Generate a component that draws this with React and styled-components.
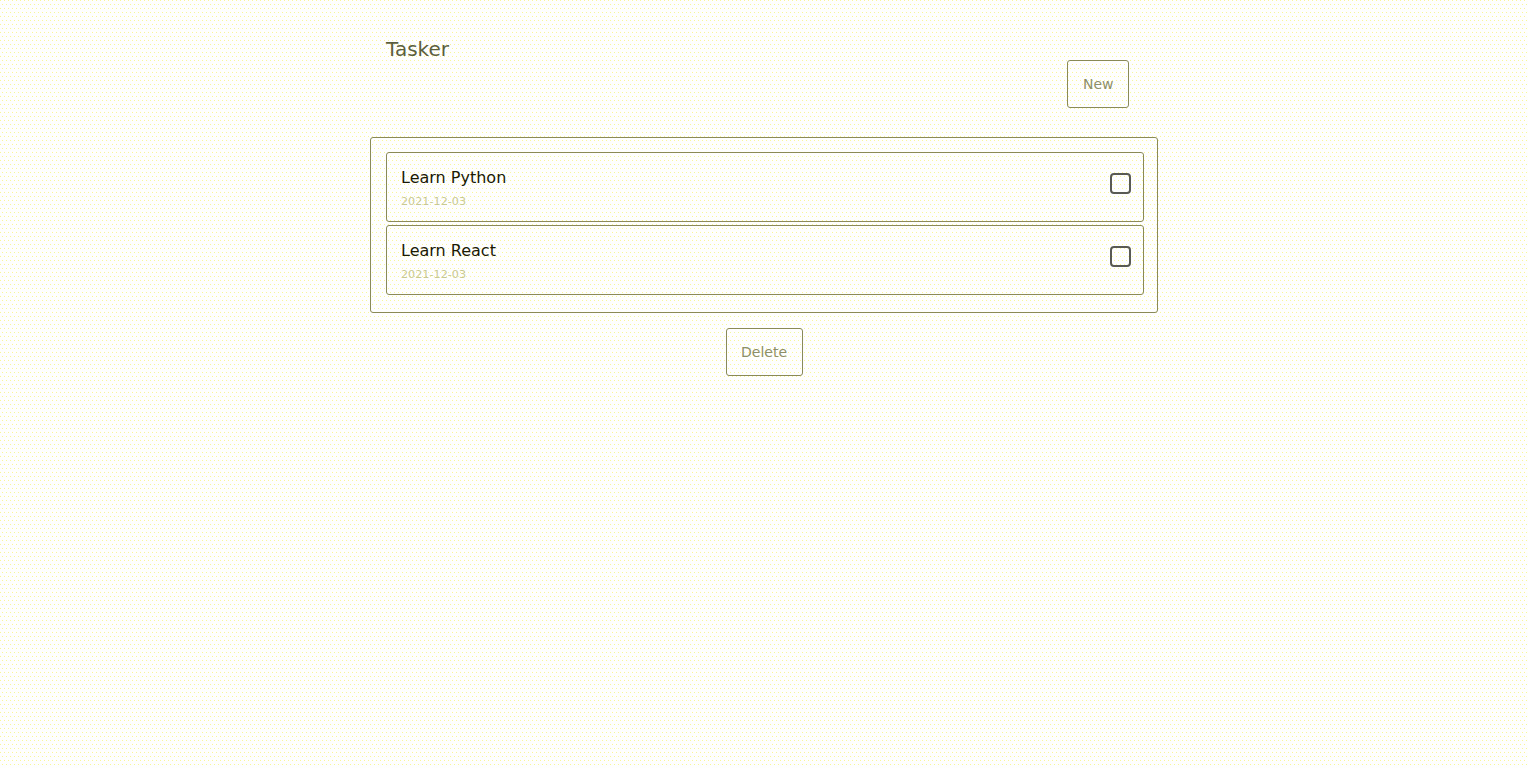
import styled, { createGlobalStyle } from 'styled-components';
import { useState } from 'react';

const GlobalStyle = createGlobalStyle`
  html, body {
    margin: 0;
    min-height: 100%;
  }
  body {
    font-family: 'DejaVu Sans', Verdana, sans-serif;
    background-color: #ffffff;
    background-image:
      conic-gradient(from 270deg at 1px 1px, #f9f59c 90deg, transparent 0),
      conic-gradient(from 270deg at 1px 1px, #f9f59c 90deg, transparent 0);
    background-size: 4px 8px, 4px 8px;
    background-position: 0 0, 2px 4px;
    min-height: 768px;
  }
`;

const Page = styled.div`
  width: 788px;
  margin: 0 auto;
  padding-top: 37px;
`;

const Header = styled.header`
  display: flex;
  justify-content: space-between;
  align-items: flex-start;
  padding: 0 29px 0 16px;
  margin-bottom: 29px;
`;

const Title = styled.h1`
  margin: 0;
  font-size: 20px;
  font-weight: normal;
  color: #5c5f3e;
`;

const Button = styled.button`
  margin-top: ${p => p.$offset || 0};
  padding: 15px 14.5px;
  font-family: 'DejaVu Sans', Verdana, sans-serif;
  font-size: 14px;
  line-height: 16px;
  color: #8d8f66;
  background: transparent;
  border: 1px solid #8a8a58;
  border-radius: 3px;
  cursor: pointer;
`;

const List = styled.ul`
  list-style: none;
  margin: 0;
  padding: 14px 13px 14px 15px;
  border: 1px solid #8a8a58;
  border-radius: 3px;
`;

const Item = styled.li`
  display: flex;
  justify-content: space-between;
  align-items: flex-start;
  margin-bottom: 3px;
  padding: 15px 12px 13px 14px;
  border: 1px solid #8a8a58;
  border-radius: 3px;
`;

const Info = styled.div`
  display: flex;
  flex-direction: column;
`;

const Name = styled.span`
  font-size: 16px;
  color: #1a1a05;
`;

const Date = styled.span`
  margin-top: 8px;
  font-size: 11.2px;
  color: #c9c992;
`;

const Check = styled.input.attrs({ type: 'checkbox' })`
  appearance: none;
  margin: 5px 0 0;
  width: 21px;
  height: 21px;
  border: 2px solid #5a5a55;
  border-radius: 4px;
  background: transparent;
  cursor: pointer;

  &:checked {
    background: #8a8a58;
  }
`;

const Footer = styled.div`
  display: flex;
  justify-content: center;
  margin-top: 15px;
`;

const tasks = [
  { id: 1, name: 'Learn Python', date: '2021-12-03' },
  { id: 2, name: 'Learn React', date: '2021-12-03' },
];

export default function App() {
  const [done, setDone] = useState({});

  return (
    <>
      <GlobalStyle />
      <Page>
        <Header>
          <Title>Tasker</Title>
          <Button $offset="23px">New</Button>
        </Header>
        <List>
          {tasks.map(t => (
            <Item key={t.id}>
              <Info>
                <Name>{t.name}</Name>
                <Date>{t.date}</Date>
              </Info>
              <Check
                checked={!!done[t.id]}
                onChange={() => setDone({ ...done, [t.id]: !done[t.id] })}
              />
            </Item>
          ))}
        </List>
        <Footer>
          <Button>Delete</Button>
        </Footer>
      </Page>
    </>
  );
}
